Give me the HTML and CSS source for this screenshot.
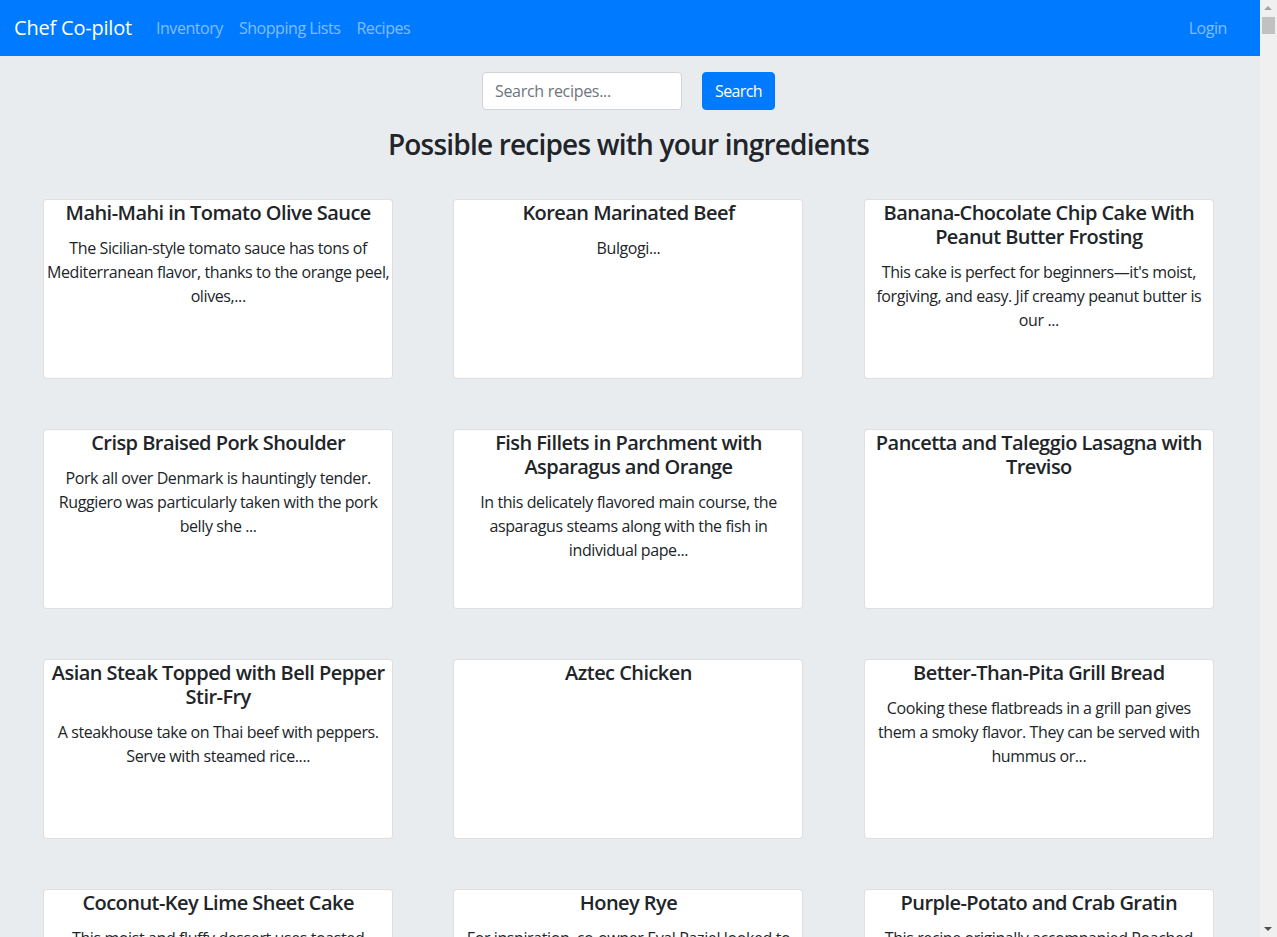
FILE: index.html
```html
<!DOCTYPE html>
<html lang="en">
<head>
<meta charset="utf-8">
<title>Chef Co-pilot</title>
<link rel="stylesheet" href="styles.css">
</head>
<body>
<nav class="navbar">
  <a class="brand" href="#">Chef Co-pilot</a>
  <ul class="nav-links">
    <li><a href="#">Inventory</a></li>
    <li><a href="#">Shopping Lists</a></li>
    <li><a href="#">Recipes</a></li>
  </ul>
  <ul class="nav-right">
    <li><a href="#">Login</a></li>
  </ul>
</nav>
<main class="main">
  <form class="search-form">
    <input class="search-input" type="text" placeholder="Search recipes...">
    <button class="search-btn" type="button">Search</button>
  </form>
  <h3 class="page-title">Possible recipes with your ingredients</h3>
  <div class="recipe-grid">
    <div class="cell"><div class="card"><h4 class="card-title">Mahi-Mahi in Tomato Olive Sauce</h4><p class="card-text">The Sicilian-style tomato sauce has tons of Mediterranean flavor, thanks to the orange peel, olives,...</p></div></div>
    <div class="cell"><div class="card"><h4 class="card-title">Korean Marinated Beef</h4><p class="card-text">Bulgogi...</p></div></div>
    <div class="cell"><div class="card"><h4 class="card-title">Banana-Chocolate Chip Cake With Peanut Butter Frosting</h4><p class="card-text">This cake is perfect for beginners—it's moist, forgiving, and easy. Jif creamy peanut butter is our ...</p></div></div>
    <div class="cell"><div class="card"><h4 class="card-title">Crisp Braised Pork Shoulder</h4><p class="card-text">Pork all over Denmark is hauntingly tender. Ruggiero was particularly taken with the pork belly she ...</p></div></div>
    <div class="cell"><div class="card"><h4 class="card-title">Fish Fillets in Parchment with Asparagus and Orange</h4><p class="card-text">In this delicately flavored main course, the asparagus steams along with the fish in individual pape...</p></div></div>
    <div class="cell"><div class="card"><h4 class="card-title">Pancetta and Taleggio Lasagna with Treviso</h4></div></div>
    <div class="cell"><div class="card"><h4 class="card-title">Asian Steak Topped with Bell Pepper Stir-Fry</h4><p class="card-text">A steakhouse take on Thai beef with peppers. Serve with steamed rice....</p></div></div>
    <div class="cell"><div class="card"><h4 class="card-title">Aztec Chicken</h4></div></div>
    <div class="cell"><div class="card"><h4 class="card-title">Better-Than-Pita Grill Bread</h4><p class="card-text">Cooking these flatbreads in a grill pan gives them a smoky flavor. They can be served with hummus or...</p></div></div>
    <div class="cell"><div class="card"><h4 class="card-title">Coconut-Key Lime Sheet Cake</h4><p class="card-text">This moist and fluffy dessert uses toasted coconut and fresh lime juice...</p></div></div>
    <div class="cell"><div class="card"><h4 class="card-title">Honey Rye</h4><p class="card-text">For inspiration, co-owner Eyal Raziel looked to the classic Old Fashioned...</p></div></div>
    <div class="cell"><div class="card"><h4 class="card-title">Purple-Potato and Crab Gratin</h4><p class="card-text">This recipe originally accompanied Poached Halibut with Herb Sauce...</p></div></div>
  </div>
</main>
<div class="scrollbar" aria-hidden="true">
  <span class="sb-arrow sb-up"></span>
  <span class="sb-thumb"></span>
  <span class="sb-arrow sb-down"></span>
</div>
</body>
</html>
```
FILE: styles.css
```css
html {
  overflow: hidden;
}
html, body {
  margin: 0;
  padding: 0;
}
body {
  margin-right: 17px;
  background: #e9ecef;
  color: #212529;
  font-family: "Open Sans", "Noto Sans", "Liberation Sans", sans-serif;
  font-size: 16px;
  line-height: 1.5;
}
.navbar {
  display: flex;
  align-items: center;
  height: 56px;
  box-sizing: border-box;
  padding: 0 25px 0 14px;
  background: #007bff;
}
.brand {
  color: #fff;
  font-size: 20px;
  letter-spacing: -0.2px;
  text-decoration: none;
  margin-right: 16px;
  line-height: 30px;
}
.nav-links, .nav-right {
  display: flex;
  list-style: none;
  margin: 0;
  padding: 0;
}
.nav-right {
  margin-left: auto;
}
.nav-links a, .nav-right a {
  display: block;
  padding: 8px;
  color: rgba(255, 255, 255, 0.5);
  letter-spacing: -0.45px;
  text-decoration: none;
}
.main {
  padding: 16px 16px 40px 13px;
}
.search-form {
  display: flex;
  justify-content: center;
  gap: 20px;
}
.search-input {
  width: 200px;
  height: 38px;
  box-sizing: border-box;
  padding: 6px 12px;
  border: 1px solid #ced4da;
  border-radius: 4px;
  font: inherit;
  letter-spacing: -0.3px;
  color: #495057;
  background: #fff;
}
.search-input::placeholder {
  color: #6c757d;
}
.search-btn {
  height: 38px;
  padding: 6px 12px;
  border: 1px solid #007bff;
  border-radius: 4px;
  background: #007bff;
  color: #fff;
  font: inherit;
  letter-spacing: -0.6px;
}
.page-title {
  margin: 18px 0 37px;
  text-align: center;
  font-size: 28px;
  font-weight: 600;
  letter-spacing: -0.8px;
  line-height: 1.2;
}
.recipe-grid {
  display: grid;
  grid-template-columns: repeat(3, 1fr);
  row-gap: 50px;
}
.cell {
  display: flex;
  justify-content: center;
}
.card {
  width: 350px;
  height: 180px;
  box-sizing: border-box;
  padding: 1px 2px;
  background: #fff;
  border: 1px solid rgba(0, 0, 0, 0.125);
  border-radius: 4px;
  text-align: center;
}
.card-title {
  margin: 0 0 11px;
  font-size: 20px;
  font-weight: 600;
  letter-spacing: -0.55px;
  line-height: 24px;
}
.card-text {
  margin: 0;
  letter-spacing: -0.4px;
}
.scrollbar {
  position: fixed;
  top: 0;
  right: 0;
  width: 17px;
  height: 100vh;
  background: #f0f0f0;
}
.sb-arrow {
  position: absolute;
  left: 4px;
  width: 0;
  height: 0;
  border-left: 4px solid transparent;
  border-right: 4px solid transparent;
}
.sb-up {
  top: 6px;
  border-bottom: 4px solid #a3a3a3;
}
.sb-down {
  bottom: 6px;
  border-top: 4px solid #505050;
}
.sb-thumb {
  position: absolute;
  left: 2px;
  top: 17px;
  width: 13px;
  height: 17px;
  background: #c1c1c1;
}
```
